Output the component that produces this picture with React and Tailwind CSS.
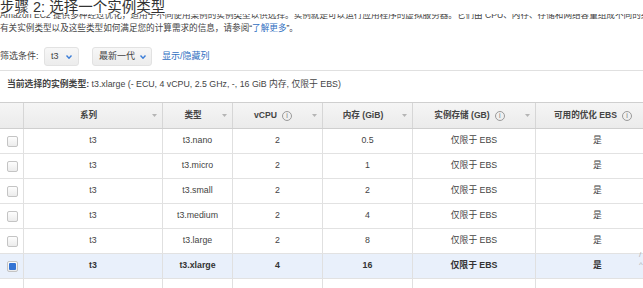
import React from "react";

const font = { fontFamily: '"Liberation Sans", "Noto Sans CJK SC", sans-serif' };

const rows = [
  { type: "t3.nano", cpu: "2", mem: "0.5" },
  { type: "t3.micro", cpu: "2", mem: "1" },
  { type: "t3.small", cpu: "2", mem: "2" },
  { type: "t3.medium", cpu: "2", mem: "4" },
  { type: "t3.large", cpu: "2", mem: "8" },
  { type: "t3.xlarge", cpu: "4", mem: "16", selected: true },
];

const cols = "grid grid-cols-[23px_139px_70px_90px_90px_123px_124px] w-[659px]";

function SortArrow() {
  return (
    <svg className="absolute right-[5px] top-[11px]" width="5" height="3" viewBox="0 0 5 3">
      <path d="M0 0h5L2.5 3z" fill="#b5b5b5" />
    </svg>
  );
}

function Info() {
  return (
    <span className="ml-[5px] inline-flex h-[10px] w-[10px] items-center justify-center rounded-full border border-[#9a9a9a] text-[7px] font-normal leading-none text-[#777]">
      i
    </span>
  );
}

function Caret() {
  return (
    <svg width="6" height="4" viewBox="0 0 6 4">
      <path d="M0.5 0.5L3 3.2 5.5 0.5" fill="none" stroke="#3b7dd8" strokeWidth="1.4" />
    </svg>
  );
}

function HeadCell({ children, arrow = true }) {
  return (
    <div className="relative flex items-center justify-center border-l border-[#d6d6d6] pr-[9px]">
      {children}
      {arrow && <SortArrow />}
    </div>
  );
}

function Checkbox({ checked }) {
  return (
    <div className="flex h-[11px] w-[11px] items-center justify-center rounded-[2px] border border-[#c4c4c4] bg-gradient-to-b from-[#fdfdfd] to-[#ececec]">
      {checked && <div className="h-[7px] w-[7px] rounded-[1px] bg-[#3474d4]" />}
    </div>
  );
}

export default function App() {
  return (
    <div className="relative h-[288px] w-[643px] overflow-hidden bg-white text-[#444]" style={font}>
      <div className="relative z-10 h-[14px] bg-white text-[14.5px] leading-[15px] text-[#333]">
        步骤 2: 选择一个实例类型
      </div>
      <div className="-mt-[5px] whitespace-nowrap text-[8.6px] leading-[13px]">
        Amazon EC2 提供多种经过优化，适用于不同使用案例的实例类型以供选择。实例就是可以运行应用程序的虚拟服务器。它们由 CPU、内存、存储和网络容量组成不同的组合，
      </div>
      <div className="whitespace-nowrap text-[8.6px] leading-[13px]">
        有关实例类型以及这些类型如何满足您的计算需求的信息，请参阅“<span className="text-[#2f6fc1]">了解更多</span>”。
      </div>

      <div className="mt-[12px] flex h-[19px] items-center text-[9px]">
        <span className="w-[44px]">筛选条件:</span>
        <div className="flex h-[19px] w-[35px] items-center justify-between rounded-[3px] border border-[#e2e2e2] bg-gradient-to-b from-[#f7f7f7] to-[#ececec] pl-[6px] pr-[6px]">
          <span>t3</span>
          <Caret />
        </div>
        <div className="ml-[13px] flex h-[19px] w-[60px] items-center justify-between rounded-[3px] border border-[#e2e2e2] bg-gradient-to-b from-[#f7f7f7] to-[#ececec] pl-[6px] pr-[5px]">
          <span>最新一代</span>
          <Caret />
        </div>
        <span className="ml-[10px] text-[#2f6fc1]">显示/隐藏列</span>
      </div>

      <div className="mt-[4px] h-[32px] border-t border-[#e0e0e0] pl-[7px] pt-[7px] text-[8.8px] leading-[13px] whitespace-nowrap">
        <span className="font-bold">当前选择的实例类型:</span> t3.xlarge (- ECU, 4 vCPU, 2.5 GHz, -, 16 GiB 内存, 仅限于 EBS)
      </div>

      <div className={`${cols} h-[27px] border-t border-b border-[#cfcfcf] bg-gradient-to-b from-[#f5f5f5] to-[#ebebeb] text-[8.6px] font-bold text-[#444]`}>
        <div />
        <HeadCell>系列</HeadCell>
        <HeadCell>类型</HeadCell>
        <HeadCell>
          vCPU
          <Info />
        </HeadCell>
        <HeadCell>内存 (GiB)</HeadCell>
        <HeadCell>
          实例存储 (GB)
          <Info />
        </HeadCell>
        <HeadCell arrow={false}>
          可用的优化 EBS
          <Info />
        </HeadCell>
      </div>

      {rows.map((r) => (
        <div
          key={r.type}
          className={`${cols} h-[25px] border-b border-[#e2e2e2] text-[8.8px] ${r.selected ? "bg-[#e9f0fb] font-bold text-[#333]" : "bg-white"}`}
        >
          <div className="flex items-center pl-[7px]">
            <Checkbox checked={r.selected} />
          </div>
          <div className="flex items-center justify-center border-l border-[#e0e0e0]">t3</div>
          <div className="flex items-center justify-center border-l border-[#e0e0e0]">{r.type}</div>
          <div className="flex items-center justify-center border-l border-[#e0e0e0]">{r.cpu}</div>
          <div className="flex items-center justify-center border-l border-[#e0e0e0]">{r.mem}</div>
          <div className="flex items-center justify-center border-l border-[#e0e0e0]">仅限于 EBS</div>
          <div className="flex items-center justify-center border-l border-[#e0e0e0]">是</div>
        </div>
      ))}
      <div className={`${cols} h-[12px]`}>
        <div />
        <div className="border-l border-[#e0e0e0]" />
        <div className="border-l border-[#e0e0e0]" />
        <div className="border-l border-[#e0e0e0]" />
        <div className="border-l border-[#e0e0e0]" />
        <div className="border-l border-[#e0e0e0]" />
        <div className="border-l border-[#e0e0e0]" />
      </div>

      <div className="absolute right-[-4px] top-[251px] flex h-[18px] w-[8px] flex-col items-start justify-between text-[8px] leading-none text-[#b0b0b0]">
        <span>/</span>
        <span>^</span>
      </div>
    </div>
  );
}
